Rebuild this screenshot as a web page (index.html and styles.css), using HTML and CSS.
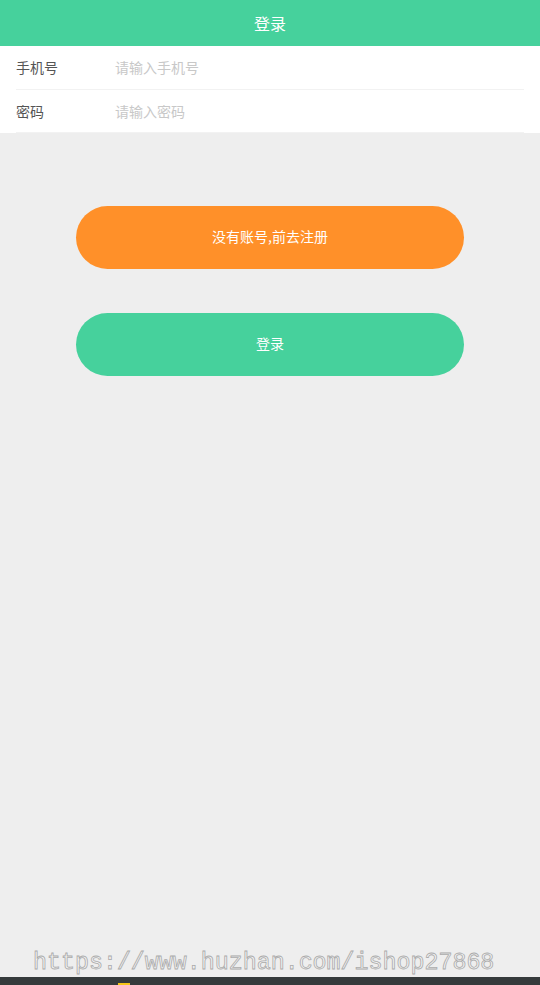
FILE: index.html
```html
<!DOCTYPE html>
<html lang="zh-CN">
<head>
<meta charset="utf-8">
<title>登录</title>
<link rel="stylesheet" href="styles.css">
</head>
<body>
<div class="page">
  <header class="topbar">登录</header>
  <form class="form">
    <div class="row">
      <span class="label">手机号</span>
      <span class="placeholder">请输入手机号</span>
    </div>
    <div class="row">
      <span class="label">密码</span>
      <span class="placeholder">请输入密码</span>
    </div>
  </form>
  <div class="actions">
    <button class="btn btn-orange" type="button">没有账号,前去注册</button>
    <button class="btn btn-green" type="button">登录</button>
  </div>
  <div class="spacer"></div>
  <div class="watermark">https://www.huzhan.com/ishop27868</div>
  <div class="bottombar"><span class="dot"></span></div>
</div>
</body>
</html>
```
FILE: styles.css
```css
* { box-sizing: border-box; }
html, body { margin: 0; padding: 0; }
body {
  background: #eeeeee;
  font-family: "Noto Sans CJK SC", "Noto Sans", sans-serif;
}
.page {
  height: 985px;
  display: flex;
  flex-direction: column;
}
.topbar {
  height: 46px;
  background: #46d19c;
  color: #fff;
  font-size: 16px;
  display: flex;
  align-items: center;
  justify-content: center;
}
.form {
  background: #fff;
  margin: 0;
  padding-left: 16px;
}
.row {
  height: 43px;
  display: flex;
  align-items: center;
  margin-right: 16px;
  border-bottom: 1px solid #f2f2f2;
  font-size: 14px;
}
.row:first-child { height: 44px; padding-bottom: 2px; }
.label {
  width: 99px;
  color: #555;
}
.placeholder {
  color: #c8c8c8;
}
.actions {
  padding: 73px 76px 0;
  display: flex;
  flex-direction: column;
  gap: 44px;
}
.btn {
  height: 63px;
  border: none;
  border-radius: 32px;
  color: #fff;
  font-family: "Noto Sans CJK SC", sans-serif;
  font-size: 14px;
  padding: 0 0 4px;
}
.btn-orange { background: #ff9029; }
.btn-green { background: #46d19c; }
.spacer { flex: 1; }
.watermark {
  font-family: "Liberation Mono", monospace;
  font-size: 23.3px;
  color: #f4f4f4;
  -webkit-text-stroke: 0.8px #aaaaaa;
  padding-left: 33px;
  line-height: 20px;
  height: 20px;
  margin-bottom: 4px;
}
.bottombar {
  height: 8px;
  background: #353a3b;
  position: relative;
}
.dot {
  position: absolute;
  left: 118px;
  bottom: 0;
  width: 12px;
  height: 2px;
  background: #f5c518;
}
```
